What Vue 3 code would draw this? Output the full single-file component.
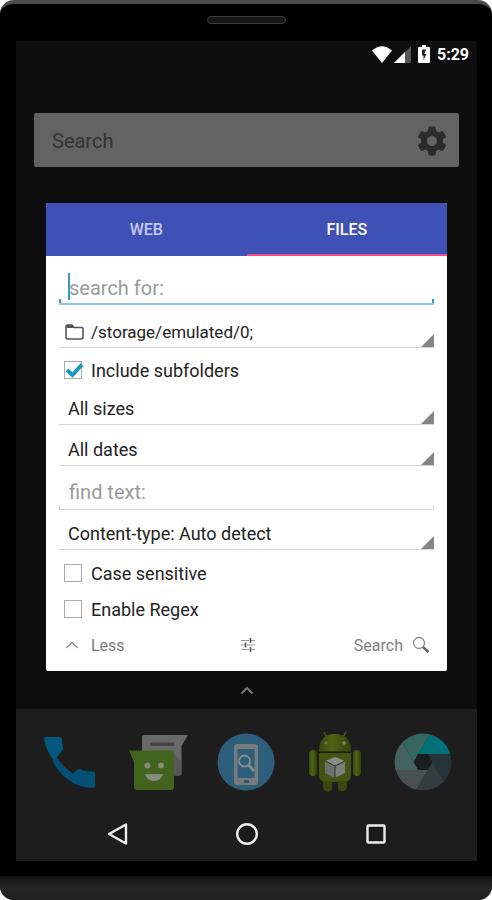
<script setup>
import { ref } from 'vue'

const tab = ref('files')
const query = ref('')
const folder = ref('/storage/emulated/0;')
const subfolders = ref(true)
const size = ref('All sizes')
const date = ref('All dates')
const text = ref('')
const type = ref('Content-type: Auto detect')
const caseSensitive = ref(false)
const regex = ref(false)

const blades = [
  { angle: 0, color: '#00707a' },
  { angle: 60, color: '#26343a' },
  { angle: 120, color: '#323c41' },
  { angle: 180, color: '#485054' },
  { angle: 240, color: '#456263' },
  { angle: 300, color: '#35665f' }
]
</script>

<template>
  <div class="device">
    <header class="bezel-top"><span class="speaker"></span></header>

    <main class="screen">
      <div class="status">
        <svg width="20" height="17" viewBox="0 0 20 17"><path d="M0 4.5Q10-4 20 4.5L10 17Z" fill="#fff" /></svg>
        <svg class="signal" width="17" height="17" viewBox="0 0 17 17"><path d="M0 17L17 0V17Z" fill="#555" /><path d="M0 17L11 6V17Z" fill="#fff" /></svg>
        <svg class="battery" width="12" height="18" viewBox="0 0 12 18"><path d="M4 0H8V2H11Q12 2 12 3V17Q12 18 11 18H1Q0 18 0 17V3Q0 2 1 2H4Z" fill="#fff" /><path d="M8 4.500H4V10.500H5.500V15L8.500 9H6.500Z" fill="#222" /></svg>
        <time>5:29</time>
      </div>

      <form class="home-search" @submit.prevent>
        <input type="text" placeholder="Search" aria-label="Search" />
        <button type="button" aria-label="Settings">
          <svg width="36" height="36" viewBox="0 0 24 24"><path fill="#2b2b2b" d="M19.140 12.940c.04-.3.06-.61.06-.94 0-.32-.02-.64-.07-.94l2.030-1.580c.18-.14.23-.41.12-.61l-1.920-3.320c-.12-.22-.37-.29-.59-.22l-2.390.96c-.5-.38-1.030-.7-1.620-.94l-.36-2.540c-.04-.24-.24-.41-.48-.41h-3.840c-.24 0-.43.17-.47.41l-.36 2.540c-.59.24-1.130.57-1.620.94l-2.390-.96c-.22-.08-.47 0-.59.22L2.740 8.870c-.12.21-.08.47.12.61l2.030 1.580c-.05.3-.09.63-.09.94s.02.64.07.94l-2.030 1.580c-.18.14-.23.41-.12.61l1.920 3.320c.12.22.37.29.59.22l2.390-.96c.5.38 1.030.7 1.620.94l.36 2.540c.05.24.24.41.48.41h3.840c.24 0 .44-.17.47-.41l.36-2.540c.59-.24 1.130-.56 1.620-.94l2.390.96c.22.08.47 0 .59-.22l1.920-3.320c.12-.22.07-.47-.12-.61l-2.010-1.580zM12 15.400c-1.880 0-3.400-1.520-3.400-3.400s1.520-3.400 3.400-3.400 3.400 1.520 3.400 3.400-1.520 3.400-3.400 3.400z" /></svg>
        </button>
      </form>

      <section class="dialog">
        <nav class="tabs">
          <button type="button" :class="{ active: tab === 'web' }" @click="tab = 'web'">WEB</button>
          <button type="button" :class="{ active: tab === 'files' }" @click="tab = 'files'">FILES</button>
        </nav>

        <form class="fields" @submit.prevent>
          <div class="entry focused">
            <span class="cursor"></span>
            <input v-model="query" type="text" placeholder="search for:" aria-label="search for:" />
          </div>

          <div class="picker path">
            <svg class="folder" width="19" height="16" viewBox="0 0 19 16"><path d="M1 3Q1 1 2.500 1H7L9 3.500H16.500Q18 3.500 18 5V13Q18 15 16.500 15H2.500Q1 15 1 13Z" fill="none" stroke="#555" stroke-width="1.600" /><path d="M2 1H7L9 4H1.500Z" fill="#555" /></svg>
            <select v-model="folder" aria-label="Folder"><option>/storage/emulated/0;</option></select>
          </div>

          <label class="check include">
            <input v-model="subfolders" type="checkbox" />
            <span class="box"><svg v-if="subfolders" width="20" height="18" viewBox="0 0 20 18"><path d="M2 8L7.500 13L17 2.500" fill="none" stroke="#1b98c4" stroke-width="4" /></svg></span>
            Include subfolders
          </label>

          <div class="picker"><select v-model="size" aria-label="Size"><option>All sizes</option></select></div>
          <div class="picker dates"><select v-model="date" aria-label="Date"><option>All dates</option></select></div>
          <div class="entry find"><input v-model="text" type="text" placeholder="find text:" aria-label="find text:" /></div>
          <div class="picker type"><select v-model="type" aria-label="Content type"><option>Content-type: Auto detect</option></select></div>

          <label class="check"><input v-model="caseSensitive" type="checkbox" /><span class="box"></span>Case sensitive</label>
          <label class="check"><input v-model="regex" type="checkbox" /><span class="box"></span>Enable Regex</label>

          <footer class="actions">
            <button type="button" class="less">
              <svg width="14" height="8" viewBox="0 0 14 8"><path d="M1 7L7 1.500L13 7" fill="none" stroke="#888" stroke-width="1.200" /></svg>Less
            </button>
            <button type="button" aria-label="Options">
              <svg width="16" height="16" viewBox="0 0 16 16" fill="none" stroke="#999" stroke-width="1.200"><path d="M1 3.500H9M11 3.500H15M1 8H5M7 8H15M1 12.500H9M11 12.500H15" /><path d="M10.500 1V6M5.500 5.500V10.500M10.500 10V15" stroke="#555" stroke-width="1.600" /></svg>
            </button>
            <button type="submit" class="go">
              Search<svg width="18" height="18" viewBox="0 0 18 18"><circle cx="7" cy="7" r="5.500" fill="none" stroke="#888" stroke-width="1.300" /><path d="M11 11L16.500 16" stroke="#666" stroke-width="2.400" /></svg>
            </button>
          </footer>
        </form>
      </section>

      <div class="drawer-hint"><svg width="14" height="9" viewBox="0 0 14 9"><path d="M1.500 7.500L7 2L12.500 7.500" fill="none" stroke="#777" stroke-width="2" /></svg></div>

      <div class="bottom">
        <nav class="dock">
          <a href="#" aria-label="Phone">
            <svg width="60" height="60" viewBox="0 0 60 60"><path d="M6 5H20Q22 5 22 7.500Q21.500 12 23.500 17L14 29Q6 18 4 7.500Q4 5 6 5Z" fill="#06577d" /><path d="M12.500 29L17 25.500Q23 35.500 33 41.500L37 38Q40 36 43 38.500Q47 39.500 53 39.500Q55 39.500 55 41.500V54Q55 56 53 56Q26 55 12.500 29Z" fill="#044f75" /></svg>
          </a>
          <a href="#" aria-label="Messages">
            <svg width="60" height="60" viewBox="0 0 60 60"><path d="M17 3H60L53.500 14V41Q53.500 43.500 51 43.500H17Q14 43.500 14 41V5Q14 3 17 3Z" fill="#696969" /><path d="M43 19L53.500 30V41Q53.500 43.500 50 43.500H44Z" fill="#575757" /><path d="M22 10.500H46V14H22Z" fill="#444" /><path d="M1 18.500H43Q46 18.500 46 21V55Q46 58 43 58H9Q6 58 6 55V30Z" fill="#42631d" /><circle cx="19.500" cy="33.500" r="3" fill="#868b7d" /><circle cx="33" cy="33.500" r="3" fill="#868b7d" /><path d="M17 42H35Q33 49 26 49Q19 49 17 42Z" fill="#868b7d" /></svg>
          </a>
          <a href="#" aria-label="File search">
            <svg width="60" height="60" viewBox="0 0 60 60"><circle cx="30" cy="30" r="28.500" fill="#2d5f7a" /><rect x="18" y="12" width="24" height="41" rx="3.500" fill="#777b7d" /><rect x="21.500" y="17" width="17" height="29" fill="#2d5f7a" /><circle cx="28.500" cy="29" r="5.500" fill="none" stroke="#858a8d" stroke-width="1.800" /><path d="M32.500 33L38 39" stroke="#858a8d" stroke-width="2.800" /><path d="M28 49.500H33" stroke="#2d4655" stroke-width="2.400" /></svg>
          </a>
          <a href="#" aria-label="Android app">
            <svg width="60" height="64" viewBox="0 0 60 64">
              <defs><linearGradient id="limb" x1="0" x2="1"><stop offset="0" stop-color="#3a480b" /><stop offset=".4" stop-color="#506414" /><stop offset="1" stop-color="#35420b" /></linearGradient></defs>
              <path d="M19 2L23 9M41 2L37 9" stroke="#465614" stroke-width="1.600" />
              <path d="M14 21Q14 4 30 4Q46 4 46 21Z" fill="url(#limb)" />
              <path d="M14 23H46V45Q46 52 39 52H21Q14 52 14 45Z" fill="#445410" />
              <path d="M14 21.500H46" stroke="#2b3509" stroke-width="1" />
              <rect x="4" y="20" width="8" height="26" rx="4" fill="url(#limb)" /><rect x="48" y="20" width="8" height="26" rx="4" fill="url(#limb)" />
              <path d="M18 51H27V59Q25 63 20 61Q18 59 18 57ZM33 51H42V57Q41 62 36 61Q33 60 33 57Z" fill="#3b480d" />
              <circle cx="21" cy="13" r="1.500" fill="#6d7358" /><circle cx="39" cy="13" r="1.800" fill="#818572" />
              <path d="M20 31L30 27L40 31L30 36Z" fill="#8b8c88" /><path d="M20 31L30 36V48L20 43Z" fill="#70716e" /><path d="M30 36L40 31V43L30 48Z" fill="#7d7e7b" /><path d="M20 31L30 36L40 31M30 36V48" fill="none" stroke="#30341f" stroke-width="1" />
            </svg>
          </a>
          <a href="#" aria-label="Camera">
            <svg width="60" height="60" viewBox="-30 -30 60 60"><defs><clipPath id="lens"><circle r="28.500" /></clipPath></defs><g clip-path="url(#lens)"><path v-for="b in blades" :key="b.angle" d="M-4.700-8L25-59.400L60-8Z" :fill="b.color" :transform="`rotate(${b.angle})`" /></g><path d="M-4.700-8H4.700L9.300 0L4.700 8H-4.700L-9.300 0Z" fill="#1b1e1f" /></svg>
          </a>
        </nav>

        <nav class="system">
          <button type="button" aria-label="Back"><svg width="24" height="24" viewBox="0 0 24 24"><path d="M20 2.500V21.500L3 12Z" fill="#1a1a1a" stroke="#eee" stroke-width="2.400" stroke-linejoin="round" /></svg></button>
          <button type="button" aria-label="Home"><svg width="24" height="24" viewBox="0 0 24 24"><circle cx="12" cy="12" r="9.800" fill="#1a1a1a" stroke="#eee" stroke-width="2.400" /></svg></button>
          <button type="button" aria-label="Recent apps"><svg width="24" height="24" viewBox="0 0 24 24"><rect x="3.500" y="3.500" width="17" height="17" rx="1" fill="#1a1a1a" stroke="#eee" stroke-width="2.400" /></svg></button>
        </nav>
      </div>
    </main>

    <div class="bezel-bottom"></div>
  </div>
</template>

<style>
body {
  margin: 0;
  background: #fff;
}
</style>

<style scoped>
.device {
  box-sizing: border-box;
  display: flex;
  flex-direction: column;
  min-height: 100vh;
  overflow: hidden;
  border-top: 4px solid #4b4b4b;
  border-radius: 14px;
  background: #000;
  font-family: Roboto, 'Liberation Sans', sans-serif;
}
button, input, select {
  margin: 0;
  padding: 0;
  border: 0;
  border-radius: 0;
  background: none;
  font: inherit;
  color: inherit;
  outline: 0;
}
svg {
  display: block;
  flex: none;
}
.bezel-top {
  display: flex;
  justify-content: center;
  align-items: flex-start;
  box-sizing: border-box;
  height: 37px;
  padding-top: 12px;
}
.speaker {
  box-sizing: border-box;
  width: 79px;
  height: 8px;
  border: 1px solid #3a3a3a;
  border-radius: 4px;
  background: #151515;
}
.screen {
  display: flex;
  flex: 1;
  flex-direction: column;
  margin: 0 15px 0 16px;
  background: #0d0d0d;
}
.status {
  display: flex;
  justify-content: flex-end;
  align-items: center;
  height: 26px;
  padding-right: 8px;
  color: #fff;
}
.signal {
  margin-left: 2px;
}
.battery {
  margin: 0 7px;
}
.status time {
  font-size: 16px;
  font-weight: 700;
}
.home-search {
  display: flex;
  align-items: center;
  height: 54px;
  margin: 46px 18px 0;
  padding: 1px 9px 0 18px;
  box-sizing: border-box;
  border-radius: 2px;
  background: #636363;
  font-size: 20px;
}
.home-search input {
  flex: 1;
  min-width: 0;
}
.home-search input::placeholder {
  color: #323232;
  opacity: 1;
}
.dialog {
  margin: 36px 30px 0;
  overflow: hidden;
  border-radius: 2px;
  background: #fff;
  color: #222;
}
.tabs {
  display: grid;
  grid-template-columns: 1fr 1fr;
  height: 53px;
  background: #3f51b5;
  font-size: 16px;
  font-weight: 500;
}
.tabs button {
  border-top: 2px solid transparent;
  border-bottom: 2px solid transparent;
  color: #c3c9ed;
}
.tabs .active {
  border-bottom-color: #f04a8c;
  color: #fff;
}
.fields {
  padding: 0 13px 8px;
  font-size: 18px;
}
.entry {
  position: relative;
  box-sizing: border-box;
  display: flex;
  align-items: center;
  height: 44px;
  padding: 8px 10px 0;
  border-bottom: 1px solid #d4d4d4;
  font-size: 20px;
}
.entry input {
  width: 100%;
}
.entry input::placeholder {
  color: #9a9a9a;
  opacity: 1;
}
.entry::before,
.entry::after {
  content: '';
  position: absolute;
  bottom: 0;
  width: 1px;
  height: 4px;
  background: #d4d4d4;
}
.entry::before {
  left: 0;
}
.entry::after {
  right: 0;
}
.focused {
  height: 49px;
  padding-top: 16px;
  border-bottom: 2px solid #8fc5df;
}
.focused::before,
.focused::after {
  width: 2px;
  background: #2e9cc6;
}
.cursor {
  position: absolute;
  left: 9px;
  top: 17px;
  width: 2px;
  height: 27px;
  background: #2e9cc6;
}
.picker {
  position: relative;
  box-sizing: border-box;
  display: flex;
  align-items: center;
  height: 33px;
  border-bottom: 1px solid #d4d4d4;
}
.picker::after {
  content: '';
  position: absolute;
  right: 0;
  bottom: 0;
  width: 13px;
  height: 13px;
  background: #858585;
  clip-path: polygon(100% 0, 100% 100%, 0 100%);
  pointer-events: none;
}
.picker select {
  width: 100%;
  height: 32px;
  padding-left: 9px;
  appearance: none;
}
.path {
  margin-top: 10px;
  padding-top: 2px;
  font-size: 17px;
}
.folder {
  margin-left: 6px;
}
.path select {
  padding-left: 7px;
}
.dates {
  margin-top: 8px;
}
.type {
  margin-top: 7px;
  margin-bottom: 5px;
}
.check {
  position: relative;
  display: flex;
  align-items: center;
  gap: 9px;
  height: 36px;
  padding-left: 5px;
}
.include {
  margin: 4px 0;
}
.check input {
  position: absolute;
  width: 18px;
  height: 18px;
  opacity: 0;
}
.box {
  box-sizing: border-box;
  width: 18px;
  height: 18px;
  border: 1px solid #aaa;
}
.actions {
  display: grid;
  grid-template-columns: 1fr auto 1fr;
  align-items: center;
  height: 36px;
  padding: 0 4px 0 6px;
  font-size: 16px;
  color: #7d7d7d;
}
.less,
.go {
  display: flex;
  align-items: center;
}
.less {
  gap: 12px;
}
.go {
  gap: 9px;
  justify-self: end;
}
.drawer-hint {
  display: flex;
  justify-content: center;
  align-items: center;
  height: 38px;
}
.bottom {
  display: flex;
  flex: 1;
  flex-direction: column;
  background: #1d1d1d;
}
.dock {
  display: grid;
  grid-template-columns: repeat(5, 1fr);
  height: 106px;
  padding: 0 10px;
}
.dock a {
  display: flex;
  justify-content: center;
  align-items: center;
}
.system {
  display: grid;
  grid-template-columns: repeat(3, 1fr);
  height: 38px;
  padding: 0 37px;
}
.system button {
  display: flex;
  justify-content: center;
  align-items: center;
}
.bezel-bottom {
  box-sizing: border-box;
  height: 39px;
  border-top: 15px solid #000;
  background: linear-gradient(#121212, #242424 50%, #202020);
}
</style>
